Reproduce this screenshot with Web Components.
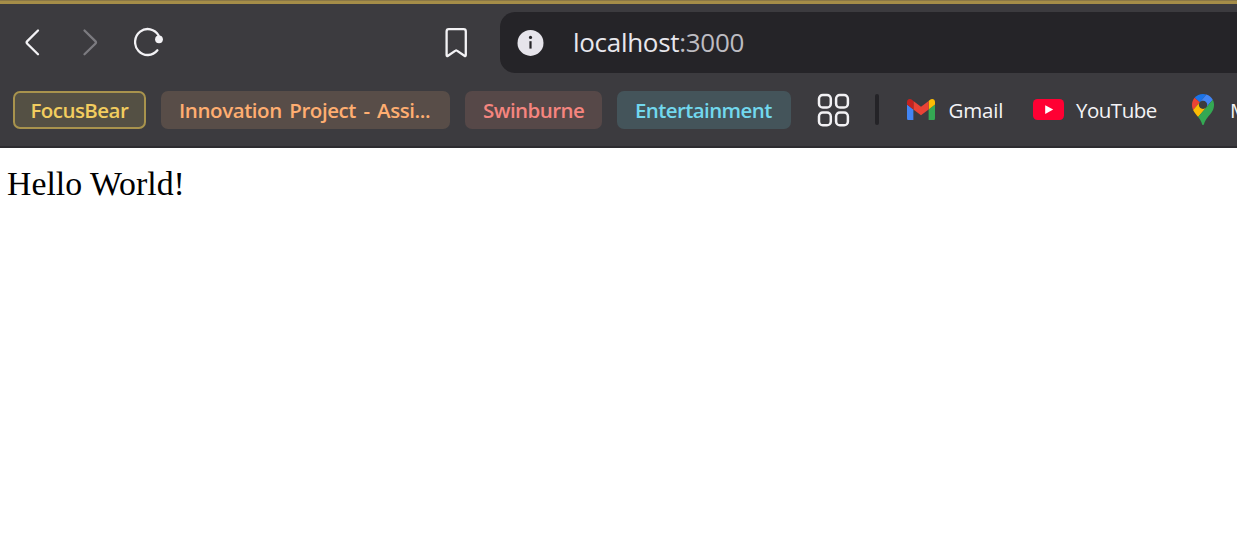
<!DOCTYPE html>
<html lang="en"><head><meta charset="utf-8"><title>localhost:3000</title>
<style>html,body{margin:0;height:100%;overflow:hidden;background:#fff}</style></head>
<body><browser-window></browser-window>
<script>
const define = (name, markup) => customElements.define(name, class extends HTMLElement {
  constructor() {
    super();
    const t = document.createElement('template');
    t.innerHTML = markup;
    this.attachShadow({mode: 'open'}).append(t.content.cloneNode(true));
  }
});

define('nav-toolbar', `<style>
:host{display:flex;height:85px;box-sizing:border-box;padding-top:8px;align-items:flex-start;background:#3c3b3f}
svg{display:block;flex:none;fill:none;stroke:#f3f2f5;stroke-width:2.3;stroke-linecap:round;stroke-linejoin:round}
.back{margin:15px 0 0 17px}.fwd{margin:15px 0 0 26px}.reload{margin:14px 0 0 27px}.mark{margin:14px 0 0 267px}
.address{display:flex;align-items:center;flex:1;height:61px;margin-left:23px;padding-left:17px;background:#252428;border-radius:15px 0 0 15px;box-sizing:border-box}
.url{margin:-2px 0 0 29px;font:26px/36px "Open Sans",sans-serif;color:#e8e7ed;white-space:nowrap;letter-spacing:-.3px}
.port{color:#bdbcc2}
</style>
<svg class="back" width="32" height="32"><path d="M21 3.5 10.3 14.1q-1.3 1.3 0 2.6L21 27.2"/></svg>
<svg class="fwd" width="32" height="32" style="stroke:#7c7b80"><path d="M9.5 3.5 20.3 14.1q1.3 1.3 0 2.6L9.5 27.2"/></svg>
<svg class="reload" width="34" height="32"><path d="M24.6 9.5A12.6 13 0 1 0 23.4 24.3"/><circle cx="25" cy="13.3" r="3.9" fill="#f3f2f5" stroke="none"/></svg>
<svg class="mark" width="42" height="32"><path d="M11.6 29V5.4q0-2.2 2.2-2.2h14.8q2.2 0 2.2 2.2V29q0 1.6-1.4.7L21.9 24.6q-.7-.5-1.4 0l-7.5 5.1q-1.4.9-1.4-.7Z"/></svg>
<div class="address"><svg width="27" height="27"><circle cx="13.5" cy="13.9" r="13" fill="#e6e4eb" stroke="none"/><path d="M13.5 12.2v7.4" stroke="#252428" stroke-width="2.2" stroke-linecap="butt"/><circle cx="13.5" cy="8.4" r="1.6" fill="#252428" stroke="none"/></svg>
<div class="url">localhost<span class="port">:3000</span></div></div>`);

define('tab-group', `<style>
:host{display:block;flex:none;height:38.5px;box-sizing:border-box;border-radius:7px;padding-left:18px;font:600 20.5px/39px "Open Sans",sans-serif;white-space:nowrap}
</style><slot></slot>`);

define('book-mark', `<style>
:host{display:flex;flex:none;height:39px;font:20.5px/39px "Open Sans",sans-serif;color:#f4f3f6;white-space:nowrap}
::slotted(svg){display:block;flex:none}
</style><slot name="icon"></slot><slot></slot>`);

define('bookmarks-bar', `<style>
:host{display:flex;height:59px;box-sizing:border-box;padding:1.5px 0 0 13px;align-items:flex-start;background:#3c3b3f;border-bottom:2px solid #2d2c30;overflow:hidden}
.focus{width:133px;padding-left:15.5px;border:2px solid #a8934d;background:#545044;color:#f2cd5f;line-height:35px;letter-spacing:-.55px}
.innovation{width:289px;margin-left:15px;background:#584d48;color:#ffae71;letter-spacing:-.42px;word-spacing:2.5px}
.swin{width:137px;margin-left:15px;background:#564848;color:#f5857f;letter-spacing:-.55px}
.ent{width:174px;margin-left:15px;background:#44545a;color:#72d8ee;letter-spacing:-.6px}
.grid{display:block;flex:none;margin:2.5px 0 0 26px;fill:none;stroke:#f2f1f4;stroke-width:2.5}
.rule{flex:none;width:4px;height:31px;margin:3px 0 0 25px;border-radius:2px;background:#242327}
.gmail{margin-left:27.5px;width:98.5px;letter-spacing:-.15px}.yt{margin-left:28px;width:129px;letter-spacing:-.5px}.maps{margin-left:29.5px}
</style>
<tab-group class="focus">FocusBear</tab-group>
<tab-group class="innovation">Innovation Project - Assi...</tab-group>
<tab-group class="swin">Swinburne</tab-group>
<tab-group class="ent">Entertainment</tab-group>
<svg class="grid" width="33" height="34"><rect x="2" y="2" width="11.8" height="12.6" rx="3.8"/><rect x="19.1" y="2" width="11.8" height="12.6" rx="3.8"/><rect x="2" y="19.6" width="11.8" height="12.6" rx="3.8"/><rect x="19.1" y="19.6" width="11.8" height="12.6" rx="3.8"/></svg>
<div class="rule"></div>
<book-mark class="gmail"><svg slot="icon" width="28" height="21.5" viewBox="52 42 88 66" preserveAspectRatio="none" style="margin:8px 14px 0 0"><path fill="#4285f4" d="M58 108h14V74L52 59v43c0 3.32 2.69 6 6 6"/><path fill="#34a853" d="M120 108h14c3.32 0 6-2.69 6-6V59l-20 15"/><path fill="#fbbc04" d="M120 48v26l20-15v-8c0-7.42-8.47-11.65-14.4-7.2"/><path fill="#ea4335" d="M72 74V48l24 18 24-18v26L96 92"/><path fill="#c5221f" d="M52 51v8l20 15V48l-5.6-4.2c-5.94-4.45-14.4-.22-14.4 7.2"/></svg>Gmail</book-mark>
<book-mark class="yt"><svg slot="icon" width="31" height="22" style="margin:8.5px 12px 0 0"><rect width="31" height="21" rx="4.5" fill="#ff0033"/><path d="M12.2 6.2v8.8l8-4.4Z" fill="#fff"/></svg>YouTube</book-mark>
<book-mark class="maps"><svg slot="icon" width="22" height="31" viewBox="0 0 92.3 132.3" preserveAspectRatio="none" style="margin:3.5px 16.5px 0 0"><path fill="#1a73e8" d="M60.2 2.2C55.8.8 51 0 46.1 0 32 0 19.3 6.4 10.8 16.5l21.8 18.3L60.2 2.2z"/><path fill="#ea4335" d="M10.8 16.5C4.1 24.5 0 34.9 0 46.1c0 8.7 1.7 15.7 4.6 22l28-33.3-21.8-18.3z"/><path fill="#4285f4" d="M46.2 28.5c9.8 0 17.7 7.9 17.7 17.7 0 4.3-1.6 8.3-4.2 11.4 0 0 13.9-16.6 27.5-32.7-5.6-10.8-15.3-19-27-22.7L32.6 34.8c3.3-3.8 8.1-6.3 13.6-6.3"/><path fill="#fbbc04" d="M46.2 63.8c-9.8 0-17.7-7.9-17.7-17.7 0-4.3 1.5-8.3 4.1-11.3l-28 33.3c4.8 10.6 12.8 19.2 21 29.9l34.1-40.5c-3.3 3.9-8.1 6.3-13.5 6.3"/><path fill="#34a853" d="M59.1 109.2c15.4-24.1 33.3-35 33.3-63 0-7.7-1.9-14.9-5.2-21.3L25.6 98c2.6 3.4 5.3 7.3 7.9 11.3 9.4 14.5 6.8 23.1 12.8 23.1s3.4-8.7 12.8-23.2"/></svg>Maps</book-mark>`);

define('page-view', `<style>:host{display:block;padding:16px 7px;font:33.8px/40px "Liberation Serif",serif;color:#000;background:#fff}</style><slot></slot>`);

define('browser-window', `<style>
:host{display:flex;flex-direction:column;height:543px;overflow:hidden;background:#fff}
.accent{height:4px;background:linear-gradient(#8a7746 1px,#a58d48 1px)}
</style><div class="accent"></div><nav-toolbar></nav-toolbar><bookmarks-bar></bookmarks-bar><page-view>Hello World!</page-view>`);
</script></body></html>
